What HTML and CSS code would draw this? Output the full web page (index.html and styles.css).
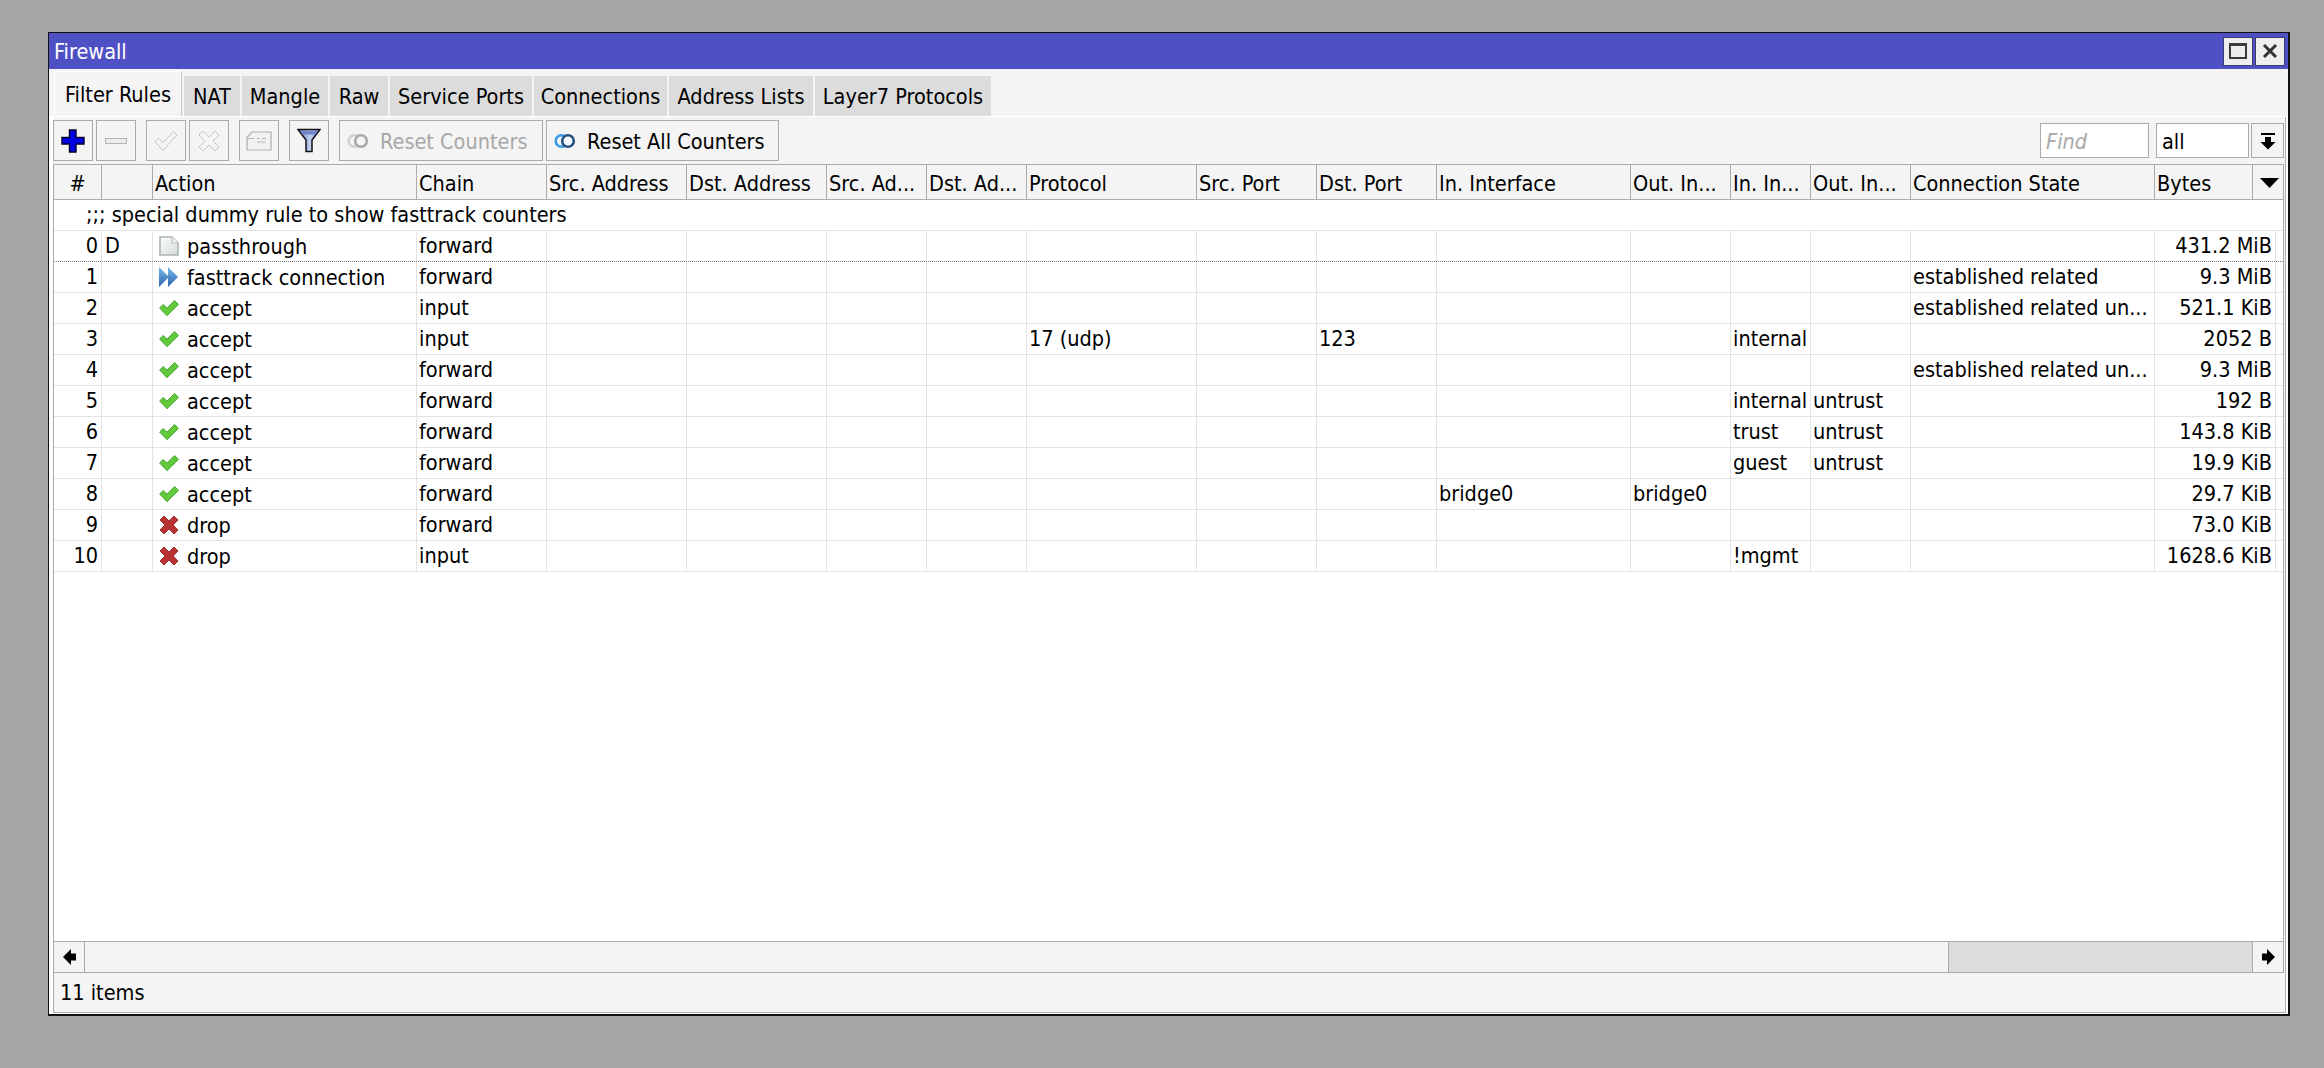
FILE: index.html
```html
<!DOCTYPE html>
<html lang="en">
<head>
<meta charset="utf-8">
<title>Firewall</title>
<link rel="stylesheet" href="styles.css">
</head>
<body>
<svg class="defs" aria-hidden="true">
  <defs>
    <linearGradient id="gDoc" x1="0" y1="0" x2="1" y2="1"><stop offset="0" stop-color="#ffffff"/><stop offset="1" stop-color="#d4d9d8"/></linearGradient>
    <linearGradient id="gFast" x1="0" y1="0" x2="0" y2="1"><stop offset="0" stop-color="#7cb8ea"/><stop offset="1" stop-color="#2a66ac"/></linearGradient>
    <linearGradient id="gFunnel" x1="0" y1="0" x2="1" y2="0"><stop offset="0" stop-color="#5f78c8"/><stop offset=".55" stop-color="#c4d0ee"/><stop offset="1" stop-color="#6f86cc"/></linearGradient>
    <symbol id="accept" viewBox="0 0 20 17"><path d="M.6 8.5 4.2 5 8 8.6 15.6 1 19.4 5 8 16.2Z" fill="#62c93c" stroke="#4aa836" stroke-width="1"/></symbol>
    <symbol id="drop" viewBox="0 0 20 20"><path d="M1 5 5 1 10 6 15 1 19 5 14 10 19 15 15 19 10 14 5 19 1 15 6 10Z" fill="#b83434" stroke="#a52a2a" stroke-width="1"/></symbol>
    <symbol id="doc" viewBox="0 0 20 20"><path d="M1 1H13L19 7V19H1Z" fill="url(#gDoc)" stroke="#aab5b3" stroke-width="1.6"/><path d="M13 1V7H19" fill="#f4f6f6" stroke="#b9c2c0" stroke-width="1.2"/></symbol>
    <symbol id="fast" viewBox="0 0 20 20"><path d="M0 0 10 10 0 20Z" fill="url(#gFast)"/><path d="M9 0 19 10 9 20Z" fill="url(#gFast)"/></symbol>
  </defs>
</svg>
<main class="window">
  <header class="titlebar">
    <span class="title">Firewall</span>
    <div class="winbtns">
      <button class="winbtn" type="button" aria-label="Maximize"><svg width="18" height="16" viewBox="0 0 18 16"><rect x="1" y="1.5" width="16" height="13.5" fill="none" stroke="#3a3a3a" stroke-width="2"/><rect x="0" y="0" width="18" height="3" fill="#3a3a3a"/></svg></button>
      <button class="winbtn" type="button" aria-label="Close"><svg width="16" height="16" viewBox="0 0 16 16"><path d="M2 2 14 14M14 2 2 14" stroke="#333" stroke-width="3" fill="none"/></svg></button>
    </div>
  </header>
  <nav class="tabs">
    <span class="tab active">Filter Rules</span>
    <span class="tab">NAT</span>
    <span class="tab">Mangle</span>
    <span class="tab">Raw</span>
    <span class="tab">Service Ports</span>
    <span class="tab">Connections</span>
    <span class="tab">Address Lists</span>
    <span class="tab">Layer7 Protocols</span>
  </nav>
  <div class="pane">
    <div class="inner">
      <div class="toolbar">
        <div class="group">
          <span class="tbtn"><svg width="24" height="24" viewBox="0 0 24 24"><path d="M8.5 1H15V8.5H23V15H15V23H8.5V15H1V8.5H8.5Z" fill="#0000e6" stroke="#00002a" stroke-width="1.4"/></svg></span>
          <span class="tbtn"><svg width="24" height="8" viewBox="0 0 24 8"><rect x="1.5" y="1.5" width="21" height="5" fill="#ececec" stroke="#b4b4b4"/></svg></span>
        </div>
        <div class="group">
          <span class="tbtn"><svg width="24" height="22" viewBox="0 0 24 22"><path d="M1 11.5 4.5 8 9 12.5 19.5 1.5 23 5 9 20.5Z" fill="#f4f4f4" stroke="#b8b8b8" stroke-dasharray="2 .6"/></svg></span>
          <span class="tbtn"><svg width="22" height="22" viewBox="0 0 22 22"><path d="M1 5 5 1 11 7 17 1 21 5 15 11 21 17 17 21 11 15 5 21 1 17 7 11Z" fill="#f4f4f4" stroke="#b8b8b8" stroke-dasharray="2 .6"/></svg></span>
        </div>
        <span class="tbtn"><svg width="26" height="20" viewBox="0 0 26 20"><path d="M1 6.5 6 1H25V19H1Z" fill="#f2f2f2" stroke="#adadad" stroke-width="1.2"/><path d="M1 7.5H8M11 7.5H14M16 7.5H20M11 11H20" stroke="#b5b5b5" stroke-width="1.2" fill="none"/></svg></span>
        <span class="tbtn"><svg width="24" height="25" viewBox="0 0 24 25"><path d="M1 1.5H23L15 12V23.5H9V12Z" fill="url(#gFunnel)" stroke="#111" stroke-width="1.5"/><path d="M3 3H21L18.5 6.5H5.5Z" fill="#6f86cc"/></svg></span>
        <div class="group">
          <span class="tbtn wide first disabled"><svg class="rings" width="22" height="16" viewBox="0 0 22 16"><circle cx="7.5" cy="8" r="5.8" fill="none" stroke="#cfcfcf" stroke-width="2.6"/><circle cx="14" cy="8" r="5.8" fill="#f4f4f4" stroke="#a8a8a8" stroke-width="2.6"/></svg>Reset Counters</span>
          <span class="tbtn wide second"><svg class="rings" width="22" height="16" viewBox="0 0 22 16"><circle cx="7.5" cy="8" r="5.8" fill="none" stroke="#3a9be8" stroke-width="2.6"/><circle cx="14" cy="8" r="5.8" fill="#f8fbff" stroke="#24527e" stroke-width="2.6"/></svg>Reset All Counters</span>
        </div>
        <div class="search">
          <span class="field find">Find</span>
          <span class="field all">all</span>
          <span class="dropbtn"><svg width="16" height="18" viewBox="0 0 16 18"><path d="M1 1H15V3H1ZM5 5H11V10H15.5L8 17.5.5 10H5Z" fill="#000"/></svg></span>
        </div>
      </div>
      <section class="table">
        <div class="row head">
          <span class="c center">#</span><span class="c"></span><span class="c">Action</span><span class="c">Chain</span><span class="c">Src. Address</span><span class="c">Dst. Address</span><span class="c">Src. Ad...</span><span class="c">Dst. Ad...</span><span class="c">Protocol</span><span class="c">Src. Port</span><span class="c">Dst. Port</span><span class="c">In. Interface</span><span class="c">Out. In...</span><span class="c">In. In...</span><span class="c">Out. In...</span><span class="c">Connection State</span><span class="c">Bytes</span><span class="c sort"><svg width="19" height="10" viewBox="0 0 19 10"><path d="M0 0H19L9.5 10Z" fill="#000"/></svg></span>
        </div>
        <div class="rows">
          <div class="comment">;;; special dummy rule to show fasttrack counters</div>
          <div class="row dotted"><span class="c num">0</span><span class="c flag">D</span><span class="c act"><svg class="ic"><use href="#doc"/></svg>passthrough</span><span class="c">forward</span><span class="c"></span><span class="c"></span><span class="c"></span><span class="c"></span><span class="c"></span><span class="c"></span><span class="c"></span><span class="c"></span><span class="c"></span><span class="c"></span><span class="c"></span><span class="c"></span><span class="c num">431.2 MiB</span></div>
          <div class="row"><span class="c num">1</span><span class="c flag"></span><span class="c act"><svg class="ic"><use href="#fast"/></svg>fasttrack connection</span><span class="c">forward</span><span class="c"></span><span class="c"></span><span class="c"></span><span class="c"></span><span class="c"></span><span class="c"></span><span class="c"></span><span class="c"></span><span class="c"></span><span class="c"></span><span class="c"></span><span class="c">established related</span><span class="c num">9.3 MiB</span></div>
          <div class="row"><span class="c num">2</span><span class="c flag"></span><span class="c act"><svg class="ic"><use href="#accept"/></svg>accept</span><span class="c">input</span><span class="c"></span><span class="c"></span><span class="c"></span><span class="c"></span><span class="c"></span><span class="c"></span><span class="c"></span><span class="c"></span><span class="c"></span><span class="c"></span><span class="c"></span><span class="c">established related un...</span><span class="c num">521.1 KiB</span></div>
          <div class="row"><span class="c num">3</span><span class="c flag"></span><span class="c act"><svg class="ic"><use href="#accept"/></svg>accept</span><span class="c">input</span><span class="c"></span><span class="c"></span><span class="c"></span><span class="c"></span><span class="c">17 (udp)</span><span class="c"></span><span class="c">123</span><span class="c"></span><span class="c"></span><span class="c">internal</span><span class="c"></span><span class="c"></span><span class="c num">2052 B</span></div>
          <div class="row"><span class="c num">4</span><span class="c flag"></span><span class="c act"><svg class="ic"><use href="#accept"/></svg>accept</span><span class="c">forward</span><span class="c"></span><span class="c"></span><span class="c"></span><span class="c"></span><span class="c"></span><span class="c"></span><span class="c"></span><span class="c"></span><span class="c"></span><span class="c"></span><span class="c"></span><span class="c">established related un...</span><span class="c num">9.3 MiB</span></div>
          <div class="row"><span class="c num">5</span><span class="c flag"></span><span class="c act"><svg class="ic"><use href="#accept"/></svg>accept</span><span class="c">forward</span><span class="c"></span><span class="c"></span><span class="c"></span><span class="c"></span><span class="c"></span><span class="c"></span><span class="c"></span><span class="c"></span><span class="c"></span><span class="c">internal</span><span class="c">untrust</span><span class="c"></span><span class="c num">192 B</span></div>
          <div class="row"><span class="c num">6</span><span class="c flag"></span><span class="c act"><svg class="ic"><use href="#accept"/></svg>accept</span><span class="c">forward</span><span class="c"></span><span class="c"></span><span class="c"></span><span class="c"></span><span class="c"></span><span class="c"></span><span class="c"></span><span class="c"></span><span class="c"></span><span class="c">trust</span><span class="c">untrust</span><span class="c"></span><span class="c num">143.8 KiB</span></div>
          <div class="row"><span class="c num">7</span><span class="c flag"></span><span class="c act"><svg class="ic"><use href="#accept"/></svg>accept</span><span class="c">forward</span><span class="c"></span><span class="c"></span><span class="c"></span><span class="c"></span><span class="c"></span><span class="c"></span><span class="c"></span><span class="c"></span><span class="c"></span><span class="c">guest</span><span class="c">untrust</span><span class="c"></span><span class="c num">19.9 KiB</span></div>
          <div class="row"><span class="c num">8</span><span class="c flag"></span><span class="c act"><svg class="ic"><use href="#accept"/></svg>accept</span><span class="c">forward</span><span class="c"></span><span class="c"></span><span class="c"></span><span class="c"></span><span class="c"></span><span class="c"></span><span class="c"></span><span class="c">bridge0</span><span class="c">bridge0</span><span class="c"></span><span class="c"></span><span class="c"></span><span class="c num">29.7 KiB</span></div>
          <div class="row"><span class="c num">9</span><span class="c flag"></span><span class="c act"><svg class="ic"><use href="#drop"/></svg>drop</span><span class="c">forward</span><span class="c"></span><span class="c"></span><span class="c"></span><span class="c"></span><span class="c"></span><span class="c"></span><span class="c"></span><span class="c"></span><span class="c"></span><span class="c"></span><span class="c"></span><span class="c"></span><span class="c num">73.0 KiB</span></div>
          <div class="row"><span class="c num">10</span><span class="c flag"></span><span class="c act"><svg class="ic"><use href="#drop"/></svg>drop</span><span class="c">input</span><span class="c"></span><span class="c"></span><span class="c"></span><span class="c"></span><span class="c"></span><span class="c"></span><span class="c"></span><span class="c"></span><span class="c"></span><span class="c">!mgmt</span><span class="c"></span><span class="c"></span><span class="c num">1628.6 KiB</span></div>
        </div>
        <div class="scrollbar">
          <span class="arrow left"><svg width="13" height="16" viewBox="0 0 13 16"><path d="M8 0V4.5H13V11.5H8V16L0 8Z" fill="#000"/></svg></span>
          <span class="track"></span>
          <span class="thumb"></span>
          <span class="arrow right"><svg width="13" height="16" viewBox="0 0 13 16"><path d="M5 0V4.5H0V11.5H5V16L13 8Z" fill="#000"/></svg></span>
        </div>
      </section>
      <footer class="status">11 items</footer>
    </div>
  </div>
</main>
</body>
</html>
```

FILE: styles.css
```css
* { box-sizing: border-box; }
html, body { margin: 0; height: 100%; }
body {
  background: #a6a6a6;
  padding: 32px 34px 52px 48px;
  font-family: "DejaVu Sans", Verdana, sans-serif;
  font-stretch: condensed;
  font-size: 21.5px;
  color: #000;
  overflow: hidden;
}
.defs { width: 0; height: 0; position: absolute; }

.window {
  width: 2242px;
  height: 984px;
  display: flex;
  flex-direction: column;
  border: solid #111;
  border-width: 1px 2px 2px 1px;
  background: #f4f4f4;
}
.titlebar {
  flex: 0 0 36px;
  display: flex;
  align-items: center;
  justify-content: space-between;
  background: #4f50c4;
  color: #fff;
  padding: 0 3px 0 5px;
}
.title { line-height: 34px; padding-top: 2px; }
.winbtns { display: flex; gap: 2px; }
.winbtn {
  width: 30px;
  height: 29px;
  padding: 0;
  display: flex;
  align-items: center;
  justify-content: center;
  background: #eeeeee;
  border: 1px solid;
  border-color: #fff #444 #444 #fff;
  outline: 1px solid #3c3c6e;
  outline-offset: -1px;
}

.tabs {
  flex: 0 0 47px;
  display: grid;
  grid-template-columns: 128px 56px 86px 58px 142px 133px 144px 176px;
  column-gap: 2px;
  align-items: end;
  padding-left: 5px;
}
.tab {
  height: 40px;
  line-height: 42px;
  background: #dcdcdc;
  white-space: nowrap;
  text-align: center;
}
.tab.active {
  height: 45px;
  line-height: 45px;
  background: #f4f4f4;
  border-top: 1px solid #fff;
  border-left: 1px solid #fff;
  border-right: 1px solid #c8c8c8;
}

.pane {
  flex: 1;
  min-height: 0;
  display: flex;
  background: #fff;
  padding: 1px 2px 1px 4px;
}
.inner {
  flex: 1;
  min-width: 0;
  display: flex;
  flex-direction: column;
  background: #f4f4f4;
  border: solid #b0b0b0;
  border-width: 0 1px 1px 0;
  padding-right: 1px;
}

.toolbar {
  flex: 0 0 47px;
  display: flex;
  align-items: center;
  gap: 10px;
}
.group { display: flex; gap: 3px; }
.tbtn {
  width: 40px;
  height: 41px;
  display: flex;
  align-items: center;
  justify-content: center;
  border: 1px solid #ababab;
  background: #f4f4f4;
  white-space: nowrap;
}
.tbtn.wide { justify-content: flex-start; padding: 1px 0 0 7px; }
.tbtn.first { width: 204px; }
.tbtn.second { width: 233px; }
.tbtn.disabled { color: #a8a8a8; }
.rings { margin-right: 11px; flex: none; }
.search { margin-left: auto; display: flex; align-items: center; }
.field {
  height: 35px;
  line-height: 35px;
  border: 1px solid #ababab;
  background: #fff;
  padding-left: 5px;
}
.find { width: 109px; color: #a8a8a8; font-style: italic; margin-right: 7px; }
.all { width: 93px; margin-right: 2px; }
.dropbtn {
  width: 33px;
  height: 35px;
  display: flex;
  align-items: center;
  justify-content: center;
  border: 1px solid #ababab;
}

.table {
  flex: 1;
  min-height: 0;
  display: flex;
  flex-direction: column;
  border: 1px solid #ababab;
  background: #fff;
}
.row {
  display: grid;
  grid-template-columns: 48px 51px 264px 130px 140px 140px 100px 100px 170px 120px 120px 194px 100px 80px 100px 244px 121px;
  height: 31px;
  border-bottom: 1px solid #e3e3e3;
}
.row.dotted { border-bottom: 1px dotted #7a7a7a; }
.row.head {
  grid-template-columns: 48px 51px 264px 130px 140px 140px 100px 100px 170px 120px 120px 194px 100px 80px 100px 244px 98px 1fr;
  height: 35px;
  background: #f4f4f4;
  border-bottom: 1px solid #ababab;
}
.c {
  display: block;
  min-width: 0;
  padding: 0 0 0 2px;
  line-height: 29px;
  white-space: nowrap;
  overflow: hidden;
  border-right: 1px solid #e3e3e3;
}
.head .c { border-right-color: #ababab; line-height: 33px; padding-top: 2px; }
.head .c.center { padding: 2px 0 0; }
.head .c:last-child { border-right: 0; }
.center { text-align: center; padding: 0; }
.num { text-align: right; padding: 0 3px 0 0; }
.flag { padding-left: 3px; }
.act { display: flex; align-items: center; padding-left: 6px; }
.ic { width: 20px; height: 20px; flex: none; margin-right: 8px; }
.sort { display: flex; align-items: center; justify-content: center; }
.comment {
  height: 31px;
  line-height: 29px;
  padding-left: 32px;
  border-bottom: 1px solid #e3e3e3;
  white-space: nowrap;
}
.rows { flex: 1; min-height: 0; }

.scrollbar {
  flex: 0 0 31px;
  display: flex;
  background: #f4f4f4;
  border-top: 1px solid #ababab;
}
.arrow {
  width: 31px;
  display: flex;
  align-items: center;
  justify-content: center;
}
.arrow.left { border-right: 1px solid #ababab; }
.arrow.right { border-left: 1px solid #ababab; }
.track { flex: 1; }
.thumb {
  width: 304px;
  background: #dcdcdc;
  border-left: 1px solid #ababab;
}

.status {
  flex: 0 0 39px;
  line-height: 38px;
  padding: 1px 0 0 6px;
  border-left: 1px solid #ababab;
}
```
